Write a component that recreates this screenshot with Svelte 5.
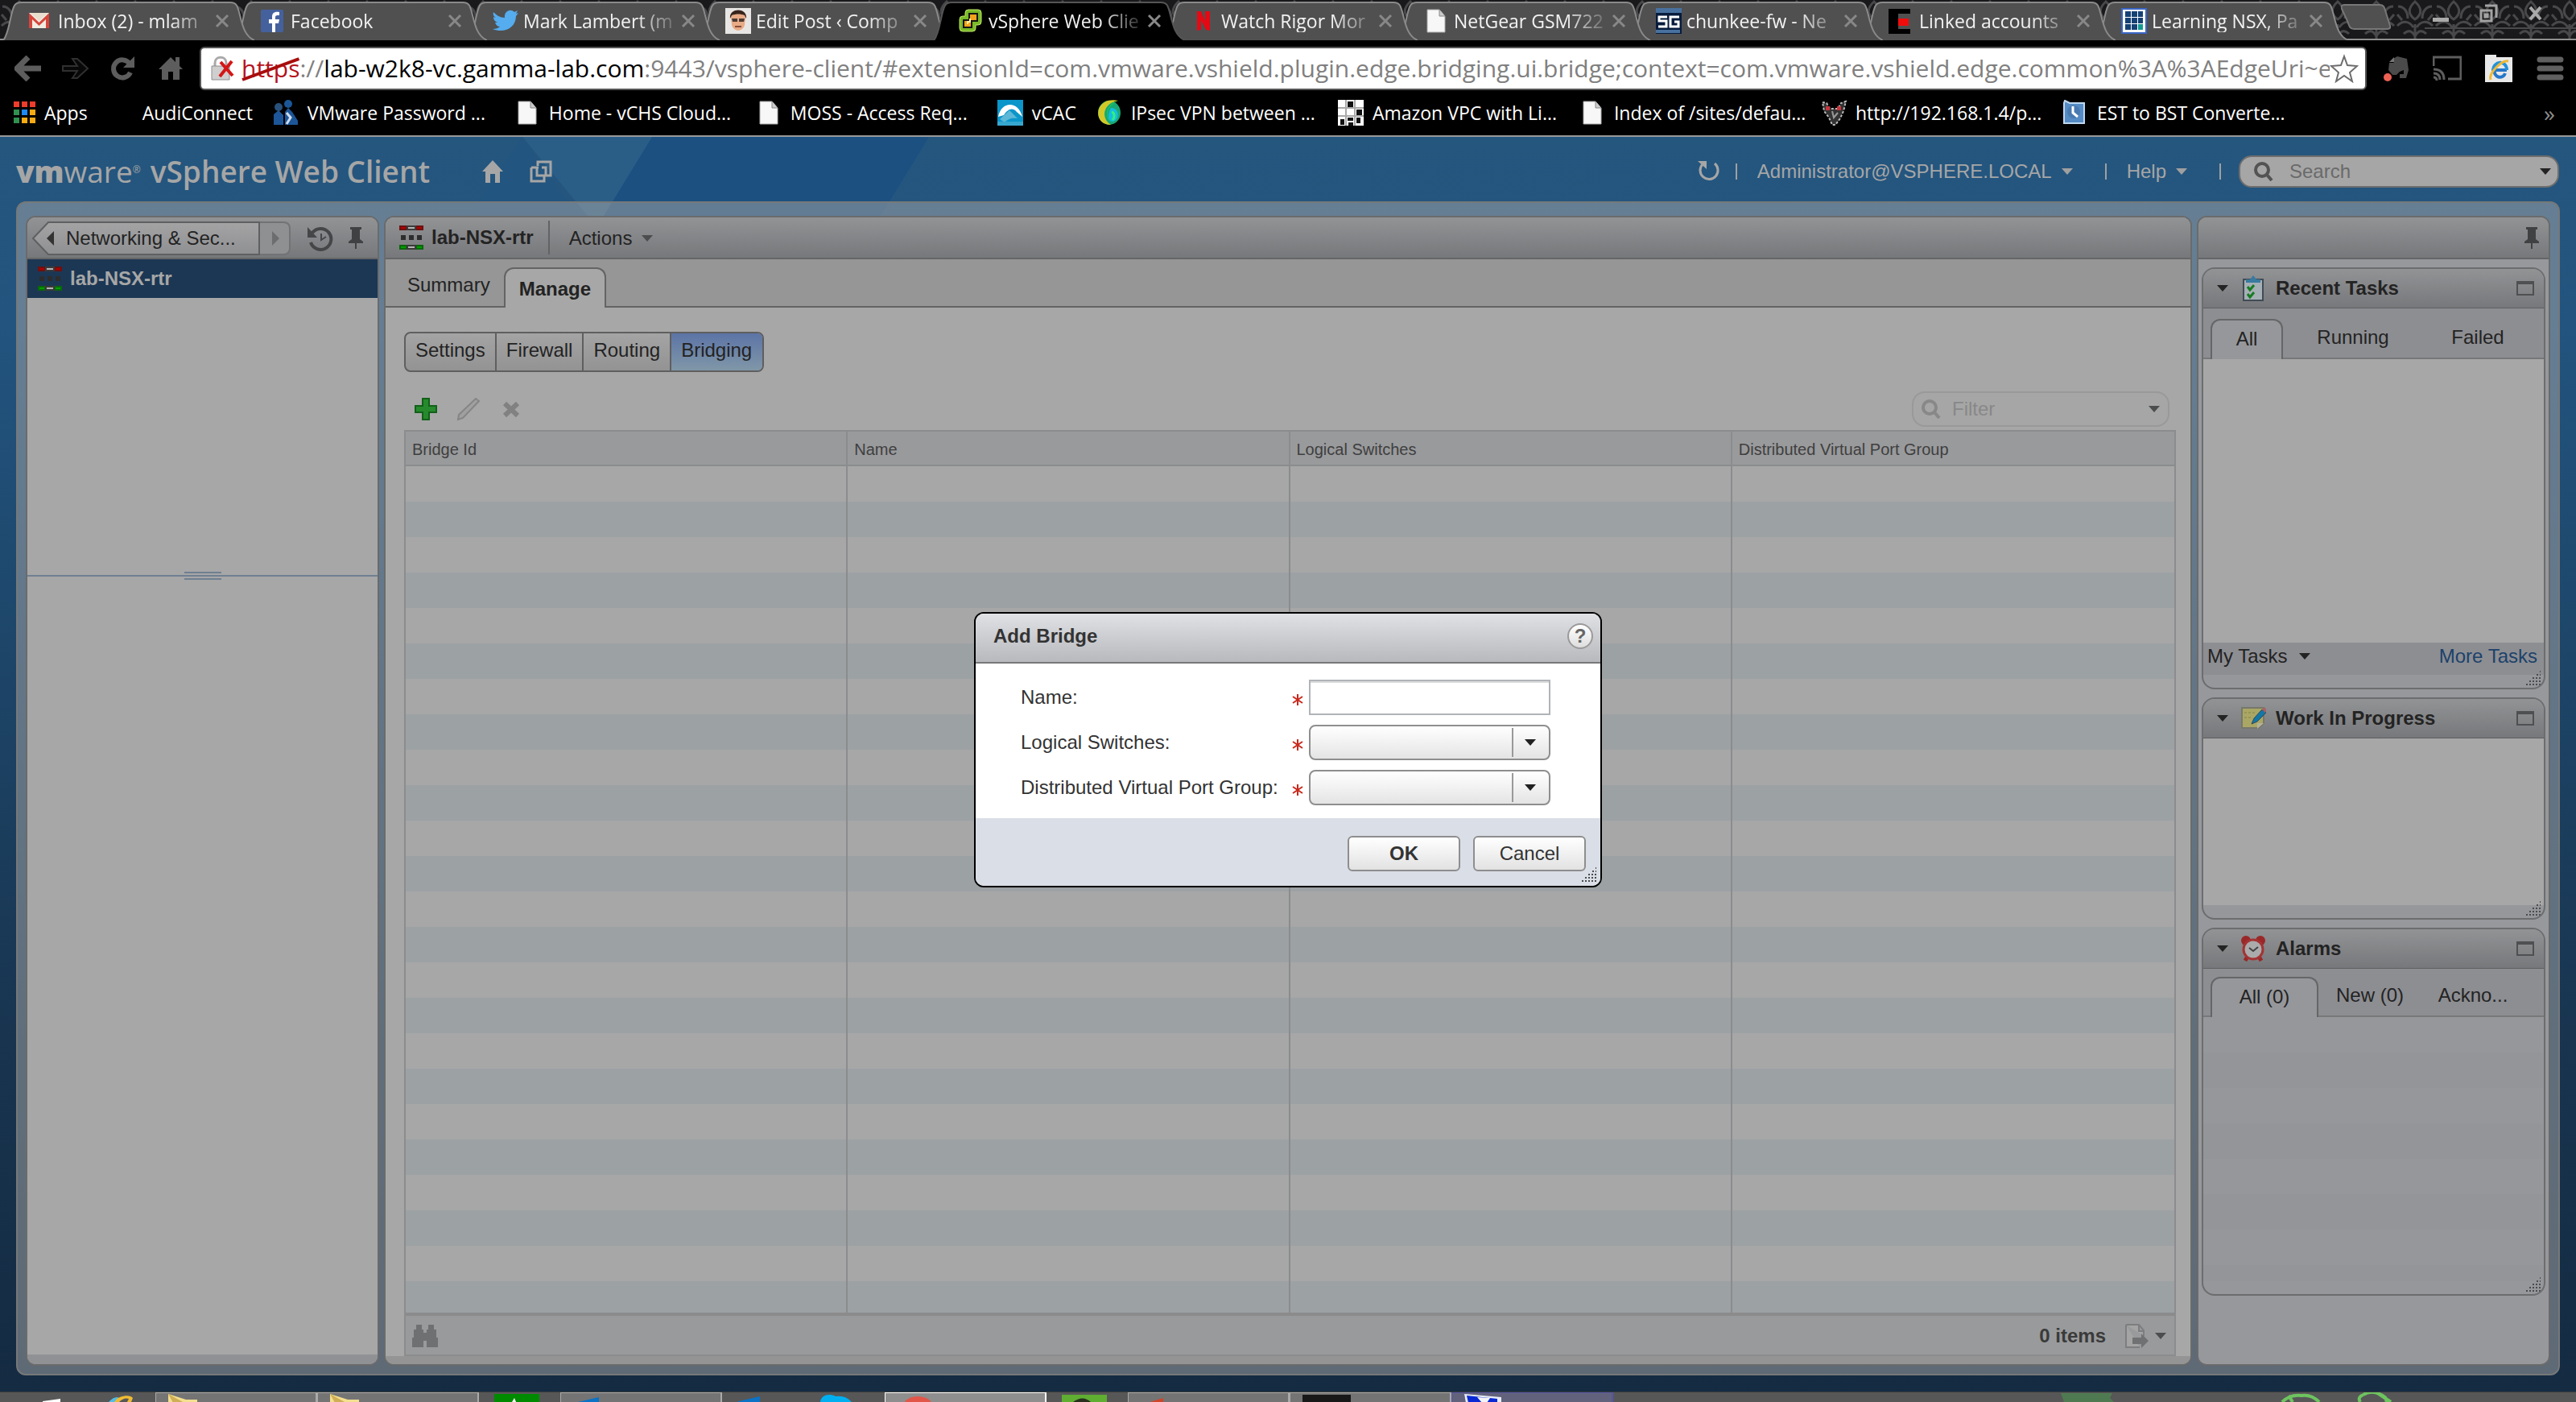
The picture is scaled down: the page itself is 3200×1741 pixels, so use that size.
<script lang="ts">
	interface Tab {
		icon: string;
		title: string;
		active?: boolean;
	}

	interface Bookmark {
		icon: string;
		title: string;
		full?: boolean;
	}

	const tabs: Tab[] = [
		{ icon: 'gmail', title: 'Inbox (2) - mlam' },
		{ icon: 'facebook', title: 'Facebook' },
		{ icon: 'twitter', title: 'Mark Lambert (m' },
		{ icon: 'face', title: 'Edit Post ‹ Comp' },
		{ icon: 'vsphere', title: 'vSphere Web Clie', active: true },
		{ icon: 'netflix', title: 'Watch Rigor Mor' },
		{ icon: 'page', title: 'NetGear GSM722' },
		{ icon: 'sg', title: 'chunkee-fw - Ne' },
		{ icon: 'linked', title: 'Linked accounts' },
		{ icon: 'grid', title: 'Learning NSX, Pa' }
	];

	const bookmarks: Bookmark[] = [
		{ icon: 'apps', title: 'Apps' },
		{ icon: 'none', title: 'AudiConnect' },
		{ icon: 'people', title: 'VMware Password ...', full: true },
		{ icon: 'page', title: 'Home - vCHS Cloud...', full: true },
		{ icon: 'page', title: 'MOSS - Access Req...', full: true },
		{ icon: 'vcac', title: 'vCAC' },
		{ icon: 'swirl', title: 'IPsec VPN between ...', full: true },
		{ icon: 'cells', title: 'Amazon VPC with Li...', full: true },
		{ icon: 'page', title: 'Index of /sites/defau...', full: true },
		{ icon: 'devil', title: 'http://192.168.1.4/p...', full: true },
		{ icon: 'clock', title: 'EST to BST Converte...', full: true }
	];

	const sections = ['Settings', 'Firewall', 'Routing', 'Bridging'];
	const columns = ['Bridge Id', 'Name', 'Logical Switches', 'Distributed Virtual Port Group'];
	const rows = Array.from({ length: 24 }, (_, i) => i);

	const taskbar = [
		{ icon: 'start' },
		{ icon: 'ie' },
		{ icon: 'folder', kind: 'open' },
		{ icon: 'folder', kind: 'open' },
		{ icon: 'store' },
		{ icon: 'office', kind: 'open' },
		{ icon: 'office' },
		{ icon: 'skype' },
		{ icon: 'chrome', kind: 'current' },
		{ icon: 'evernote' },
		{ icon: 'powerpoint', kind: 'open' },
		{ icon: 'console', kind: 'open' },
		{ icon: 'remote', kind: 'alert' }
	];

	let name = $state('');
	let section = $state('Bridging');
</script>

{#snippet favicon(kind: string)}
	<svg class="favicon" viewBox="0 0 32 32" aria-hidden="true">
		{#if kind === 'gmail'}
			<rect x="2" y="6" width="25" height="19" fill="#f1ece2" />
			<path d="M2 6l12.500 12L27 6v19h-4V14l-8.500 8L6 14v11H2z" fill="#d7463b" />
			<path d="M4 6h21L14.500 16z" fill="#eadfce" />
		{:else if kind === 'facebook'}
			<rect x="1" y="2" width="28" height="28" rx="2" fill="#45619d" />
			<path d="M15 30V19h-4v-5h4v-3c0-5 3-7 9-6v4c-4 0-5 0-5 3v2h5l-1 5h-4v11z" fill="#fff" />
		{:else if kind === 'twitter'}
			<path
				d="M1 5c4 4 8 7 14 7-1-8 7-12 12-7l4-2-2 4 3-1-3 4c0 14-14 22-29 16 4 0 7-1 9-3-3 0-5-2-6-5h3c-4-2-5-4-5-7l3 1C1 10 0 8 1 5z"
				fill="#55acee"
			/>
		{:else if kind === 'face'}
			<rect width="32" height="32" fill="#e8e6e4" />
			<path d="M7 11C6 1 26 1 25 11l-1 10c-2 9-14 9-16 0z" fill="#e8ab85" />
			<path d="M6 13C4-1 28-1 26 13l-2-4c-5-2-11-2-16 0z" fill="#37241c" />
			<path d="M8 13h7v4H9zm9 0h7l-1 4h-6z" fill="#4c3b35" />
			<path d="M12 23h8" stroke="#884c3b" stroke-width="2" />
		{:else if kind === 'vsphere'}
			<path d="M13 2h12q4 0 4 4v11q0 4-4 4h-3v4q0 4-4 4H6q-4 0-4-4V14q0-4 4-4h3V6q0-4 4-4z" fill="#79b928" stroke="#c2e86a" />
			<path d="M13 6h12v11h-7v8H6V14h7z" fill="#151515" />
			<path d="M15 8h8v7h-8zM8 16h8v7H8z" fill="#f3a21b" />
			<path d="M15 13v4h-3v3" stroke="#fff1a2" stroke-width="2" fill="none" />
		{:else if kind === 'netflix'}
			<path d="M8 4h5l5 12V4h6v24l-5-1-6-12v12l-5 1z" fill="#e50914" />
		{:else if kind === 'page'}
			<path d="M5 2h15l7 8v20H5z" fill="#f7f7f7" stroke="#a9a9a9" />
			<path d="M20 2v8h7" fill="#ccc" stroke="#888" />
		{:else if kind === 'sg'}
			<rect width="32" height="32" fill="#071c3c" />
			<path d="M0 0h32v6H0zM0 27h30v4H0z" fill="#48719f" />
			<path d="M14 11H4v5h9v7H3M29 11H18v12h10v-6h-5" fill="none" stroke="#fff" stroke-width="3" />
		{:else if kind === 'linked'}
			<path d="M0 1h27v6H12v19h15v6H0z" fill="#000" />
			<path d="M12 13h13v9H12z" fill="#f00c0c" />
		{:else if kind === 'grid'}
			<rect x="1" y="1" width="30" height="30" fill="#fff" stroke="#3a66c6" stroke-width="2" />
			<path d="M5 4h7v7H5zm8 0h7v7h-7zm8 0h6v7h-6zM5 12h7v7H5zm8 0h7v7h-7zm8 0h6v7h-6zM5 20h7v7H5zm8 0h7v7h-7z" fill="#154275" />
			<path d="M21 20h6v7h-6z" fill="#159b91" />
		{:else if kind === 'apps'}
			<path d="M5 2h7v7H5zm10 0h7v7h-7zm10 0h7v7h-7z" fill="#ee3d2c" />
			<path d="M5 12h7v7H5zM5 22h7v7H5z" fill="#31914e" />
			<path d="M15 12h7v7h-7z" fill="#1e88f5" />
			<path d="M25 12h7v7h-7zM15 22h7v7h-7zM25 22h7v7h-7z" fill="#f6ab13" />
		{:else if kind === 'people'}
			<circle cx="7" cy="9" r="5" fill="#28517c" />
			<circle cx="19" cy="5" r="5" fill="#1b5798" />
			<path d="M1 31V18l6-5 6 6v12zM15 31V15l4-5 5 5 7 11v5z" fill="#1c5698" />
			<path d="M17 16l5 6-5 8" stroke="#cddced" stroke-width="3" fill="none" />
		{:else if kind === 'vcac'}
			<rect width="32" height="32" fill="#0a96ca" />
			<path d="M1 21C5 1 26 1 31 21l-7-6c-6-7-12-2-16 4z" fill="#fff" />
			<path d="M3 24l12-11 10 10c-8-1-12 1-16 5z" fill="#5db7d6" />
			<path d="M0 27h32v5H0z" fill="#36a7cf" />
		{:else if kind === 'swirl'}
			<ellipse cx="16" cy="16" rx="14" ry="15" fill="#18a875" />
			<path d="M27 1C8 4 5 23 18 31 5 31 0 21 3 11 8 1 17-1 27 1z" fill="#d2c928" />
			<path d="M27 1C11 6 9 24 20 28 11 24 10 9 27 1z" fill="#14e044" />
			<path d="M18 10c7 0 10 6 8 12s-10 7-11 0c0-5 1-9 3-12z" fill="#13bde0" />
			<path d="M19 15c4 1 4 7 1 10" stroke="#32f07e" stroke-width="3" fill="none" />
		{:else if kind === 'cells'}
			<rect width="32" height="32" fill="#fff" />
			<path d="M0 10h32M0 20h32M10 0v32M21 0v32" stroke="#aaa" stroke-width="2" />
			<path d="M12 2h7v7h-7zM23 12h7v7h-7zM3 24h5v7H3zM12 22h7v4h-7zM13 28h6v4h-6zM23 22h5v7h-5z" fill="#111" />
		{:else if kind === 'devil'}
			<path d="M2 3l5 1 4 7h10l4-7 6-2-3 12-4 9-6 8h-4l-4-9-6-8z" fill="#333" stroke="#b9b9b9" stroke-width="2" stroke-dasharray="3 2" />
			<path d="M6 8h5v5H6zM20 8h5v5h-5z" fill="#c6343b" />
			<path d="M14 14l2 8 5-6" stroke="#999" fill="none" stroke-width="2" />
		{:else if kind === 'clock'}
			<path d="M3 1l6 3h18v25H2V4z" fill="#558bc5" stroke="#bdd8f0" stroke-width="2" />
			<circle cx="14" cy="15" r="8" fill="#487ab1" />
			<path d="M13 8v8l6 5" stroke="#fff" stroke-width="3" fill="none" />
		{/if}
	</svg>
{/snippet}

{#snippet caret(tone: string)}
	<svg class="caret caret--{tone}" viewBox="0 0 14 8" aria-hidden="true"><path d="M0 0h14L7 8z" /></svg>
{/snippet}

{#snippet routerIcon()}
	<svg class="router-icon" viewBox="0 0 30 30" aria-hidden="true">
		<path d="M0 0h30v6H0z" fill="#6b1111" />
		<path d="M2 2h6v2H2zm20 0h6v2h-6z" fill="#b20000" />
		<path d="M9 0h12v6H9zM9 24h12v6H9z" fill="#3b3b3b" />
		<path d="M11 2h8v2h-8zm0 24h8v2h-8z" fill="#b4b4b4" />
		<path d="M2 12h6v6H2zm10 0h6v6h-6zm10 0h6v6h-6z" fill="#2d2d2d" />
		<path d="M0 24h9v6H0zm21 0h9v6h-9z" fill="#0b650b" />
		<path d="M2 26h6v2H2zm20 0h6v2h-6z" fill="#00a000" />
	</svg>
{/snippet}

{#snippet pin()}
	<svg class="pin" viewBox="0 0 18 28" aria-hidden="true">
		<path d="M2 0h14v3h-2v12l4 3v2H0v-2l4-3V3H2zM8 20h2v7H8z" fill="#404143" />
	</svg>
{/snippet}

{#snippet magnifier()}
	<svg class="magnifier" viewBox="0 0 24 24" aria-hidden="true">
		<circle cx="10" cy="10" r="8" /><path d="M16 16l6 7" />
	</svg>
{/snippet}

{#snippet grip()}
	<svg class="grip" viewBox="0 0 20 20" aria-hidden="true">
		<path
			d="M1 18h18M5 14h14M9 10h10M14 6h5M18 2h1"
			stroke="#4a4b4d"
			stroke-width="2"
			stroke-dasharray="2 2"
		/>
	</svg>
{/snippet}

{#snippet required()}
	<svg class="required" viewBox="0 0 14 14" aria-hidden="true"><path d="M7 0v14M1 3l12 8M13 3L1 11" /></svg>
{/snippet}

{#snippet cardHeader(title: string, kind: string)}
	<header class="card__header">
		{@render caret('dark')}
		<svg class="card__icon" viewBox="0 0 32 32" aria-hidden="true">
			{#if kind === 'tasks'}
				<path d="M4 5h24v26H4z" fill="#a5b0b6" stroke="#414b55" stroke-width="2" />
				<path d="M7 9V5h5l4-5 4 5h5v4z" fill="#397a9f" />
				<path d="M9 14l3 4 5-6M9 23l3 4 5-6" fill="none" stroke="#187b22" stroke-width="3" />
			{:else if kind === 'work'}
				<path d="M2 3h27v19l-6 6H2z" fill="#aaa765" stroke="#77786a" stroke-width="2" />
				<path d="M5 9h14M5 15h10" stroke="#85824c" stroke-dasharray="3 2" />
				<path d="M21 29v-7h8z" fill="#b4b29a" />
				<path d="M14 23l3-7L27 5l5 4-11 11z" fill="#1377a6" stroke="#364957" />
				<path d="M27 5l3-3 3 4-2 3z" fill="#aa6068" />
			{:else}
				<circle cx="7" cy="6" r="6" fill="#9a2828" />
				<circle cx="25" cy="6" r="6" fill="#9a2828" />
				<path d="M6 31l4-7m16 7l-4-7" stroke="#9a2828" stroke-width="5" />
				<circle cx="16" cy="17" r="12" fill="#ababab" stroke="#a43333" stroke-width="3" />
				<path d="M11 15l5 4 6-5" fill="none" stroke="#424242" stroke-width="2" />
			{/if}
		</svg>
		<h2>{title}</h2>
		<button class="maximise" aria-label="Maximise {title}"></button>
	</header>
{/snippet}

<div class="desktop">
	<nav class="tabstrip" aria-label="Browser tabs">
		<svg class="tabstrip__pattern" aria-hidden="true">
			<defs>
				<pattern id="damask" width="48" height="50" patternUnits="userSpaceOnUse">
					<path
						d="M24 2c-9 8-9 16 0 22 9-6 9-14 0-22zM3 8c8 0 12 7 12 15M45 8c-8 0-12 7-12 15M2 32c7-7 15-6 20 2M46 32c-7-7-15-6-20 2M24 30v18M10 42q8-8 14 3 6-11 14-3M2 18l6 7M46 18l-6 7"
						fill="none"
						stroke="#48484b"
						stroke-width="3"
					/>
				</pattern>
			</defs>
			<rect width="100%" height="100%" fill="url(#damask)" />
		</svg>
		{#each tabs as tab, i}
			<div class="tab" class:tab--active={tab.active} style:z-index={tab.active ? 20 : 10 - i}>
				<svg class="tab__shape" viewBox="0 0 312 48" aria-hidden="true">
					<path d="M0 48c5-5 7-18 10-31S15 1 22 1h260c8 0 9 4 12 16s6 26 18 31" />
				</svg>
				{@render favicon(tab.icon)}
				<a class="tab__title" href="#{tab.icon}">{tab.title}</a>
				<button class="tab__close" aria-label="Close tab">
					<svg viewBox="0 0 18 18" aria-hidden="true"><path d="M2 2l14 14M16 2L2 16" /></svg>
				</button>
			</div>
		{/each}
		<button class="new-tab" aria-label="New tab">
			<svg viewBox="0 0 62 32" aria-hidden="true"><path d="M4 1h44c6 0 6 4 8 10l5 16c1 3-1 4-4 4H16c-5 0-6-4-8-10L1 6C0 3 1 1 4 1z" /></svg>
		</button>
		<div class="window-buttons">
			<button aria-label="Minimise"><svg viewBox="0 0 24 24"><path d="M2 17h20v5H2z" fill="#aaa" /></svg></button>
			<button aria-label="Restore"><svg viewBox="0 0 24 24"><path d="M8 2h14v15M3 8h13v13H3zM8 13h3v3H8z" fill="none" stroke="#a3a3a3" stroke-width="3" /></svg></button>
			<button aria-label="Close window"><svg viewBox="0 0 24 24"><path d="M5 4l13 15M18 4L5 19" stroke="#aaa" stroke-width="4" /></svg></button>
		</div>
	</nav>

	<div class="toolbar">
		<div class="toolbar__nav">
			<button aria-label="Back"><svg viewBox="0 0 34 32"><path d="M17 2L3 16l14 14M4 16h29" fill="none" stroke="#5d5d5d" stroke-width="7" /></svg></button>
			<button aria-label="Forward"><svg viewBox="0 0 34 32"><path d="M1 13h18L13 4h6l13 12-13 12h-6l6-9H1z" fill="#080808" stroke="#303030" stroke-width="2" /></svg></button>
			<button aria-label="Reload"><svg viewBox="0 0 34 32"><path d="M26 21a11 11 0 1 1-1-11" fill="none" stroke="#5d5d5d" stroke-width="6" /><path d="M31 1v14H17z" fill="#5d5d5d" /></svg></button>
			<button aria-label="Home"><svg viewBox="0 0 34 32"><path d="M17 2l6 6V2h5v11l4 4h-4v13h-8V20h-6v10H6V17H2z" fill="#5d5d5d" /></svg></button>
		</div>
		<label class="address">
			<svg class="address__lock" viewBox="0 0 32 32" aria-hidden="true">
				<path d="M7 14V9c0-9 14-9 14 0v5" fill="none" stroke="#aaa" stroke-width="3" />
				<path d="M3 13h22v17H3z" fill="#cfcfcf" stroke="#8e8e8e" />
				<path d="M14 8l15 17M28 7L13 26" stroke="#d41616" stroke-width="4" />
			</svg>
			<span class="address__scheme">
				https
				<svg viewBox="0 0 70 30" preserveAspectRatio="none" aria-hidden="true"><path d="M1 28L69 2" /></svg>
			</span>
			<span class="address__grey">://</span>
			<span class="address__host">lab-w2k8-vc.gamma-lab.com</span>
			<input
				class="address__grey"
				value=":9443/vsphere-client/#extensionId=com.vmware.vshield.plugin.edge.bridging.ui.bridge;context=com.vmware.vshield.edge.common%3A%3AEdgeUri~e"
				aria-label="Address"
			/>
			<svg class="address__star" viewBox="0 0 36 34" aria-hidden="true"><path d="M18 2l4 11 12 1-9 8 3 11-10-7-10 7 3-11-9-8 12-1z" fill="#fff" stroke="#6c6c6c" stroke-width="2" /></svg>
		</label>
		<div class="toolbar__extensions">
			<button aria-label="Evernote"><svg viewBox="0 0 36 36"><path d="M13 7l7-4 12 3 2 14-3 10h-8v-5h5v-5l-5 2-4 4h-5l-5-6 1-9h6z" fill="#4b4b4b" /><path d="M10 10l6-6v6z" fill="#777" /><circle cx="8" cy="29" r="5" fill="#ed6155" /></svg></button>
			<button aria-label="Cast"><svg viewBox="0 0 36 36"><path d="M1 15V4h34v27H19" fill="none" stroke="#5d5d5d" stroke-width="3" /><path d="M1 19q13 0 13 13M1 24q8 0 8 8M1 29q4 0 4 4" fill="none" stroke="#5d5d5d" stroke-width="3" /></svg></button>
			<button aria-label="IE Tab"><svg viewBox="0 0 36 36"><path d="M1 1h14v3h20v31H1z" fill="#e9e9e9" /><path d="M28 20H13a6 6 0 0 0 13 4" fill="none" stroke="#2577c9" stroke-width="4" /><path d="M11 21c0-13 17-14 17-1" fill="none" stroke="#2492da" stroke-width="4" /><path d="M8 32C5 24 22 7 30 9" fill="none" stroke="#edb936" stroke-width="3" /></svg></button>
			<button aria-label="Menu"><svg viewBox="0 0 36 36"><path d="M5 7h26M5 18h26M5 29h26" stroke="#606060" stroke-width="7" stroke-linecap="round" /></svg></button>
		</div>
	</div>

	<nav class="bookmarks" aria-label="Bookmarks">
		{#each bookmarks as bookmark}
			<a class="bookmark" class:bookmark--full={bookmark.full} href="#bookmark">
				{@render favicon(bookmark.icon)}
				<span>{bookmark.title}</span>
			</a>
		{/each}
		<button class="bookmarks__more" aria-label="More bookmarks">»</button>
	</nav>

	<div class="client">
		<svg class="client__rays" viewBox="0 0 3200 130" aria-hidden="true">
			<path d="M810 0h344l-80 130H730z" fill="#1b5081" />
			<path d="M649 0h161l-60 98h-20z" fill="#2b5e87" />
			<path d="M649 0l90 130H560z" fill="#22557f" />
		</svg>

		<header class="masthead">
			<div class="brand">
				<span class="brand__vm"><b>vm</b>ware<sup>®</sup></span>
				<span>vSphere Web Client</span>
			</div>
			<a href="#home" aria-label="Home"><svg class="masthead__icon" viewBox="0 0 28 28"><path d="M14 0l13 14h-4v14h-6V17h-6v11H5V14H1z" fill="#a6a6a6" /></svg></a>
			<a href="#switch" aria-label="Open windows"><svg class="masthead__icon" viewBox="0 0 28 28"><path d="M10 7V2h16v17h-6M2 9h9M2 9v17h16v-8M9 8v11h11V9h-5" fill="none" stroke="#a6a6a6" stroke-width="3" /></svg></a>
			<div class="session">
				<button aria-label="Refresh"><svg class="masthead__icon" viewBox="0 0 28 28"><path d="M22 4a11 11 0 1 1-15 1" fill="none" stroke="#a6a6a6" stroke-width="3" /><path d="M1 1h11v10z" fill="#a6a6a6" /></svg></button>
				<span class="rule"></span>
				<button class="session__user">Administrator@VSPHERE.LOCAL {@render caret('light')}</button>
				<span class="rule"></span>
				<button class="session__help">Help {@render caret('light')}</button>
				<span class="rule"></span>
			</div>
			<label class="search search--global">
				{@render magnifier()}
				<input type="search" placeholder="Search" aria-label="Search inventory" />
				{@render caret('dark')}
			</label>
		</header>

		<main class="frame">
			<aside class="panel">
				<div class="panel__bar navigator">
					<button class="crumb">
						<svg class="crumb__shape" viewBox="0 0 322 42" aria-hidden="true">
							<defs>
								<linearGradient id="crumb" x2="0" y2="1"><stop stop-color="#a4a4a5" /><stop offset="1" stop-color="#8f9092" /></linearGradient>
							</defs>
							<path d="M282 1h30q8 0 8 8v24q0 8-8 8h-30z" fill="#8f9092" stroke="#727375" stroke-width="2" />
							<path d="M1 21L20 1h262v40H20z" fill="url(#crumb)" stroke="#5f6062" stroke-width="2" />
							<path d="M18 21l9-9v18z" fill="#333" />
							<path d="M307 21l-9-9v18z" fill="#6c6d6f" />
						</svg>
						<span>Networking &amp; Sec...</span>
					</button>
					<svg class="history" viewBox="0 0 32 32" aria-hidden="true">
						<path d="M6 9a13 13 0 1 1-2 12" fill="none" stroke="#454648" stroke-width="4" />
						<path d="M0 2v13h12z" fill="#454648" />
						<path d="M17 10v8l6-4" fill="none" stroke="#454648" stroke-width="2" />
					</svg>
					{@render pin()}
				</div>
				<a class="tree-item" href="#lab">{@render routerIcon()} lab-NSX-rtr</a>
				<div class="tree-space"></div>
				<div class="splitter"><span></span></div>
				<div class="panel__fill"></div>
				<div class="panel__foot"></div>
			</aside>

			<section class="panel">
				<div class="panel__bar object-bar">
					{@render routerIcon()}
					<h1>lab-NSX-rtr</h1>
					<button class="actions">Actions {@render caret('mid')}</button>
				</div>
				<nav class="main-tabs">
					<a href="#summary">Summary</a>
					<a class="current" href="#manage">Manage</a>
				</nav>
				<div class="content">
					<div class="sections">
						{#each sections as item}
							<button class:selected={item === section} onclick={() => (section = item)}>{item}</button>
						{/each}
					</div>
					<div class="tools">
						<button aria-label="Add"><svg viewBox="0 0 30 30"><path d="M11 2h8v9h9v8h-9v9h-8v-9H2v-8h9z" fill="#268a2d" stroke="#126019" stroke-width="2" /></svg></button>
						<button aria-label="Edit"><svg viewBox="0 0 30 30"><path d="M3 22L24 2l4 3L8 26l-6 2z" fill="#a0a0a0" stroke="#858585" stroke-width="2" /></svg></button>
						<button aria-label="Delete"><svg viewBox="0 0 30 30"><path d="M7 8l16 15M23 8L7 23" stroke="#818181" stroke-width="6" /></svg></button>
						<label class="search search--filter">
							{@render magnifier()}
							<input type="search" placeholder="Filter" aria-label="Filter bridges" />
							{@render caret('mid')}
						</label>
					</div>
					<div class="grid">
						<div class="grid__scroll">
							<table>
								<thead>
									<tr>
										{#each columns as column}
											<th scope="col">{column}</th>
										{/each}
									</tr>
								</thead>
								<tbody>
									{#each rows as row (row)}
										<tr>
											{#each columns as column (column)}
												<td></td>
											{/each}
										</tr>
									{/each}
								</tbody>
							</table>
						</div>
						<footer class="grid__foot">
							<svg class="binoculars" viewBox="0 0 32 28" aria-hidden="true">
								<path d="M5 0h7v6h2v4h4V6h2V0h7v6h3v10h2v12H18v-8h-4v8H0V16h2V6h3z" fill="#6f7072" />
							</svg>
							<strong>0 items</strong>
							<button class="export" aria-label="Export">
								<svg viewBox="0 0 30 30"><path d="M1 1h16l6 7v7M1 1v28h17M17 1v8h6" fill="#a4a4a4" stroke="#7d7e80" stroke-width="2" /><path d="M9 17h11v-5l9 9-9 9v-5H9z" fill="#707173" /></svg>
								{@render caret('mid')}
							</button>
						</footer>
					</div>
				</div>
				<div class="content-foot"></div>
			</section>

			<aside class="panel panel--side">
				<div class="panel__bar side-bar">{@render pin()}</div>
				<div class="cards">
					<section class="card">
						{@render cardHeader('Recent Tasks', 'tasks')}
						<nav class="card__tabs card__tabs--tasks">
							<a class="current" href="#all">All</a>
							<a href="#running">Running</a>
							<a href="#failed">Failed</a>
						</nav>
						<div class="card__list card__list--tasks"></div>
						<div class="card__links">
							<button>My Tasks {@render caret('dark')}</button>
							<a href="#more">More Tasks</a>
						</div>
						<div class="card__foot">{@render grip()}</div>
					</section>
					<section class="card">
						{@render cardHeader('Work In Progress', 'work')}
						<div class="card__list card__list--work"></div>
						<div class="card__foot">{@render grip()}</div>
					</section>
					<section class="card">
						{@render cardHeader('Alarms', 'alarms')}
						<nav class="card__tabs card__tabs--alarms">
							<a class="current" href="#all-alarms">All (0)</a>
							<a href="#new">New (0)</a>
							<a href="#ack">Ackno...</a>
						</nav>
						<div class="card__list card__list--alarms"></div>
						<div class="card__foot">{@render grip()}</div>
					</section>
				</div>
			</aside>
		</main>

		<div class="overlay">
			<form class="dialog" role="dialog" aria-labelledby="dialog-title" onsubmit={(e) => e.preventDefault()}>
				<header class="dialog__header">
					<h2 id="dialog-title">Add Bridge</h2>
					<button type="button" class="help" aria-label="Help">?</button>
				</header>
				<div class="dialog__body">
					<label for="bridge-name">Name:</label>
					{@render required()}
					<input id="bridge-name" type="text" bind:value={name} />

					<label for="bridge-switch">Logical Switches:</label>
					{@render required()}
					<div class="select">
						<select id="bridge-switch"><option value=""></option></select>
						<span class="select__arrow">{@render caret('black')}</span>
					</div>

					<label for="bridge-group">Distributed Virtual Port Group:</label>
					{@render required()}
					<div class="select">
						<select id="bridge-group"><option value=""></option></select>
						<span class="select__arrow">{@render caret('black')}</span>
					</div>
				</div>
				<footer class="dialog__footer">
					<button class="button button--primary">OK</button>
					<button type="button" class="button">Cancel</button>
				</footer>
				<div class="dialog__grip">{@render grip()}</div>
			</form>
		</div>
	</div>

	<footer class="taskbar">
		{#each taskbar as task}
			<div class="task task--{task.kind ?? 'pinned'}">
				<svg viewBox="0 0 60 12" aria-hidden="true">
					{#if task.icon === 'start'}
						<path d="M38 12v-1l22-3v4z" fill="#fff" />
					{:else if task.icon === 'ie'}
						<path d="M31 12C42 4 54 2 58 7l-2 5h-5l2-4q-6-2-12 4z" fill="#f0bc33" />
						<path d="M28 12q6-7 12-6l-5 6z" fill="#51bce6" />
					{:else if task.icon === 'folder'}
						<path d="M0 1l22 7h14v4H0z" fill="#f3df8f" />
						<path d="M0 1l20 11H6z" fill="#cfae55" />
					{:else if task.icon === 'store'}
						<path d="M4 2h56v10H4z" fill="#008a00" />
						<path d="M26 12l3-5 2 5z" fill="#fff" />
					{:else if task.icon === 'office'}
						<path d="M6 11l26-6v7H4z" fill="#0b72c6" />
					{:else if task.icon === 'skype'}
						<path d="M6 12C7 3 17 1 25 5q12-2 20 7z" fill="#00aff0" />
					{:else if task.icon === 'chrome'}
						<path d="M8 12Q13 4 25 4t18 8z" fill="#e2564a" />
					{:else if task.icon === 'evernote'}
						<rect x="4" y="3" width="56" height="9" fill="#5fae32" />
						<path d="M18 12q12-9 22 0z" fill="#28301d" />
					{:else if task.icon === 'powerpoint'}
						<path d="M8 12l20-6v6z" fill="#d0452a" />
					{:else if task.icon === 'console'}
						<path d="M0 2h60v10H0z" fill="#181818" />
					{:else}
						<path d="M0 1l46 4v7H2z" fill="#e8ecf5" />
						<path d="M3 3l38 4v5H5z" fill="#0a28d4" />
						<path d="M16 5l16 1-4 6h-6z" fill="#f4f4f4" />
					{/if}
				</svg>
			</div>
		{/each}
		<svg class="taskbar__paint" viewBox="0 0 640 12" aria-hidden="true">
			<path d="M0 1h64l-3 6 5 5H4z" fill="#4f7a51" />
			<path d="M275 12q10-10 24-8 12-2 22 8M288 12l-5-8M376 3q8-6 20-1 10 4 8 10M372 12q-4-6 4-9M392 0l18 12" fill="none" stroke="#6dc45f" stroke-width="4" />
		</svg>
	</footer>
</div>

<style>
	:global(body) {
		background: #000;
	}

	.desktop {
		--ui: 'Liberation Sans', Arial, sans-serif;
		--chrome: 'Open Sans', 'Noto Sans', sans-serif;
		display: flex;
		flex-direction: column;
		height: 100vh;
		overflow: hidden;
		color: #232323;
		font: 24px/28px var(--ui);
	}

	.desktop *,
	.desktop *::before {
		box-sizing: border-box;
	}

	button,
	input,
	select {
		margin: 0;
		padding: 0;
		border: 0;
		background: none;
		color: inherit;
		font: inherit;
	}

	input {
		min-width: 0;
		outline: 0;
	}

	a {
		color: inherit;
		text-decoration: none;
	}

	svg {
		display: block;
		flex: none;
	}

	h1,
	h2 {
		margin: 0;
		font-size: 24px;
		line-height: 28px;
	}

	/* browser chrome */
	.tabstrip {
		position: relative;
		display: flex;
		flex: none;
		height: 50px;
		padding-left: 4px;
		border-bottom: 2px solid #8f8f8f;
		background: #19191b;
		font-family: var(--chrome);
	}

	.tabstrip__pattern {
		position: absolute;
		inset: 0;
		width: 100%;
		height: 100%;
	}

	.tab {
		position: relative;
		display: flex;
		flex: 0 1 289px;
		align-items: center;
		min-width: 0;
		padding: 4px 8px 0 30px;
		color: #f2f2f2;
	}

	.tab__shape {
		position: absolute;
		top: 2px;
		left: 0;
		width: 312px;
		height: 48px;
		fill: #505051;
		stroke: #8a8a8a;
		stroke-width: 2;
	}

	.tab--active .tab__shape {
		fill: #000;
		stroke: #555;
	}

	.favicon {
		position: relative;
		width: 32px;
		height: 32px;
	}

	.tab__title {
		position: relative;
		flex: 1;
		margin: 0 10px 0 6px;
		font-size: 23px;
		white-space: nowrap;
		mask-image: linear-gradient(90deg, #000 75%, rgb(0 0 0 / 20%));
	}

	.tab__close {
		position: relative;
	}

	.tab__close svg {
		width: 18px;
		height: 18px;
		fill: none;
		stroke: #888;
		stroke-width: 3;
	}

	.new-tab {
		position: relative;
		margin: 0 0 6px 14px;
	}

	.new-tab svg {
		width: 62px;
		height: 32px;
		fill: #505051;
		stroke: #777;
		stroke-width: 2;
	}

	.window-buttons {
		position: relative;
		display: flex;
		gap: 35px;
		align-items: center;
		height: 36px;
		margin-left: auto;
		padding: 0 38px 0 8px;
		border-bottom: 2px solid #49494b;
	}

	.window-buttons svg {
		width: 24px;
		height: 24px;
	}

	.toolbar {
		display: flex;
		flex: none;
		align-items: center;
		height: 70px;
		background: #000;
	}

	.toolbar__nav {
		display: flex;
		gap: 25px;
		padding: 0 19px 0 18px;
	}

	.toolbar__nav svg {
		width: 34px;
		height: 32px;
	}

	.address {
		display: flex;
		flex: 1;
		align-items: center;
		min-width: 0;
		height: 54px;
		padding: 0 8px 0 10px;
		border: 2px solid #555;
		border-radius: 6px;
		background: #fff;
		font: 30px/40px var(--chrome);
		white-space: nowrap;
	}

	.address__lock {
		width: 32px;
		height: 32px;
		margin-right: 8px;
	}

	.address__scheme {
		position: relative;
		color: #b5121b;
	}

	.address__scheme svg {
		position: absolute;
		inset: 6px 0 auto;
		width: 100%;
		height: 30px;
		stroke: #a80d0d;
		stroke-width: 4;
	}

	.address__grey {
		color: #808080;
	}

	.address__host {
		color: #000;
	}

	.address input {
		flex: 1;
	}

	.address__star {
		width: 36px;
		height: 36px;
	}

	.toolbar__extensions {
		display: flex;
		gap: 28px;
		padding: 0 14px 0 18px;
	}

	.toolbar__extensions svg {
		width: 36px;
		height: 36px;
	}

	.bookmarks {
		display: flex;
		flex: none;
		align-items: center;
		height: 50px;
		padding: 0 26px 8px 12px;
		border-bottom: 2px solid #999;
		background: #000;
		color: #fff;
		font-family: var(--chrome);
		font-size: 23px;
	}

	.bookmark {
		display: flex;
		gap: 11px;
		align-items: center;
		padding-right: 25px;
		white-space: nowrap;
	}

	.bookmark--full {
		flex: 0 1 300px;
		padding-right: 0;
	}

	.bookmarks__more {
		margin-left: auto;
		color: #8b8b8b;
		font-size: 28px;
	}

	/* web client */
	.client {
		position: relative;
		display: flex;
		flex: 1;
		flex-direction: column;
		min-height: 0;
		background: linear-gradient(#25567e, #22547f 15%, #1d4568 42%, #18344f 72%, #142b42);
	}

	.client__rays {
		position: absolute;
		top: 0;
		left: 0;
		width: 100%;
	}

	.masthead {
		position: relative;
		display: flex;
		flex: none;
		gap: 32px;
		align-items: center;
		height: 80px;
		padding: 6px 21px 0 20px;
		color: #a6a6a6;
	}

	.brand {
		display: flex;
		gap: 12px;
		margin-right: 32px;
		font: 600 37px/40px var(--chrome);
	}

	.brand__vm {
		font-weight: 400;
	}

	.brand b {
		font-weight: 800;
	}

	.brand sup {
		font-size: 12px;
		line-height: 12px;
		vertical-align: 12px;
	}

	.masthead__icon {
		width: 28px;
		height: 28px;
	}

	.session {
		display: flex;
		align-items: center;
		margin-left: auto;
		white-space: nowrap;
	}

	.session__user,
	.session__help {
		display: flex;
		gap: 12px;
		align-items: center;
		margin: 0 40px 0 25px;
	}

	.rule {
		width: 2px;
		height: 20px;
		margin-left: 20px;
		background: #a0a0a0;
	}

	.session__user + .rule,
	.session__help + .rule {
		margin-left: 0;
	}

	.session__help + .rule {
		margin-right: -10px;
	}

	.caret {
		width: 14px;
		height: 8px;
		fill: #232323;
	}

	.caret--light {
		fill: #a0a0a0;
	}

	.caret--mid {
		fill: #4c4d4e;
	}

	.caret--black {
		fill: #222;
	}

	.search {
		display: flex;
		align-items: center;
		border: 2px solid #6e6e6e;
		border-radius: 16px;
		background: #a6a6a6;
	}

	.search input {
		flex: 1;
	}

	.search input::placeholder {
		color: #6a6a6a;
		opacity: 1;
	}

	.search--global {
		width: 398px;
		height: 40px;
		padding: 0 8px 0 17px;
	}

	.magnifier {
		width: 24px;
		height: 24px;
		margin-right: 20px;
		fill: none;
		stroke: #535353;
		stroke-width: 4;
	}

	.search--filter {
		width: 320px;
		height: 44px;
		margin: 0 8px 0 auto;
		padding: 0 10px;
		border-color: #999;
	}

	.search--filter .magnifier {
		margin-right: 14px;
		stroke: #888;
	}

	.search--filter input::placeholder {
		color: #888;
	}

	.frame {
		position: relative;
		display: grid;
		flex: 1;
		grid-template-columns: 439px minmax(0, 1fr) 439px;
		gap: 6px;
		min-height: 0;
		margin: 0 20px 20px;
		padding: 16px 10px 10px;
		border: 2px solid #767879;
		border-radius: 12px;
		background: rgb(166 166 166 / 51%);
	}

	.panel {
		display: flex;
		flex-direction: column;
		min-width: 0;
		min-height: 0;
		overflow: hidden;
		border: 2px solid #6a6b6c;
		border-radius: 12px;
		background: #a7a7a7;
	}

	.panel--side {
		background: #97989c;
	}

	.panel__bar {
		display: flex;
		flex: none;
		align-items: center;
		height: 52px;
		border-bottom: 2px solid #656667;
		background: linear-gradient(#929395, #77787b);
	}

	.navigator {
		justify-content: space-between;
		padding: 2px 18px 0 6px;
	}

	.crumb {
		position: relative;
		width: 322px;
		height: 42px;
		padding-left: 42px;
		text-align: left;
	}

	.crumb span {
		position: relative;
	}

	.crumb__shape {
		position: absolute;
		inset: 0;
		width: 322px;
		height: 42px;
	}

	.history {
		width: 32px;
		height: 32px;
	}

	.pin {
		width: 18px;
		height: 28px;
	}

	.router-icon {
		width: 30px;
		height: 30px;
	}

	.tree-item {
		display: flex;
		flex: none;
		gap: 10px;
		align-items: center;
		height: 48px;
		padding-left: 13px;
		background: #1c3754;
		color: #a7a7a7;
		font-weight: 700;
	}

	.tree-space {
		flex: none;
		height: 340px;
	}

	.splitter {
		display: flex;
		flex: none;
		align-items: center;
		justify-content: center;
		height: 10px;
		background: linear-gradient(#6f7f91, #6f7f91) center / 100% 2px no-repeat;
	}

	.splitter span {
		width: 46px;
		height: 10px;
		border: solid #6f7f91;
		border-width: 2px 0;
	}

	.panel__fill {
		flex: 1;
	}

	.panel__foot {
		height: 12px;
		background: #909195;
	}

	.object-bar {
		padding-left: 17px;
	}

	.object-bar h1 {
		margin: 0 18px 0 10px;
	}

	.actions {
		display: flex;
		gap: 12px;
		align-items: center;
		height: 42px;
		padding: 2px 0 0 24px;
		border-left: 2px solid #626364;
	}

	.main-tabs {
		display: flex;
		flex: none;
		align-items: flex-end;
		height: 60px;
		padding-left: 27px;
		background: linear-gradient(#646464, #646464) bottom / 100% 2px no-repeat #969696;
	}

	.main-tabs a {
		height: 42px;
		padding-right: 17px;
	}

	.main-tabs .current {
		height: 50px;
		padding: 11px 17px 0;
		border: 2px solid #646464;
		border-bottom: 0;
		border-radius: 12px 12px 0 0;
		background: #a7a7a7;
		font-weight: 700;
	}

	.content {
		display: flex;
		flex: 1;
		flex-direction: column;
		min-height: 0;
		padding: 30px 18px 0 23px;
	}

	.sections {
		display: flex;
		align-self: flex-start;
		overflow: hidden;
		border: 2px solid #5f5f5f;
		border-radius: 8px;
		background: linear-gradient(#a4a4a4, #939393);
	}

	.sections button {
		height: 46px;
		padding: 0 12px 4px;
	}

	.sections button + button {
		border-left: 2px solid #5f5f5f;
	}

	.sections .selected {
		padding-right: 13px;
		background: linear-gradient(#5c74a6, #8097a8);
	}

	.tools {
		display: flex;
		gap: 23px;
		align-items: center;
		height: 44px;
		margin: 24px 0 4px;
		padding-left: 12px;
	}

	.tools svg:not(.caret, .magnifier) {
		width: 30px;
		height: 30px;
	}

	.grid {
		display: flex;
		flex: 1;
		flex-direction: column;
		min-height: 0;
		border: 2px solid #8b8c8d;
	}

	.grid__scroll {
		flex: 1;
		min-height: 0;
		overflow: hidden;
	}

	table {
		width: 100%;
		border-spacing: 0;
		table-layout: fixed;
	}

	th {
		height: 43px;
		padding: 2px 8px 0;
		border-bottom: 2px solid #8b8c8d;
		background: #999a9c;
		color: #3f3f3f;
		font-size: 20px;
		font-weight: 400;
		text-align: left;
	}

	td {
		height: 44px;
		padding: 0;
	}

	th:not(:last-child),
	td:not(:last-child) {
		border-right: 2px solid #8b8c8d;
	}

	tbody tr:nth-child(even) {
		background: #9ca1a4;
	}

	.grid__foot {
		display: flex;
		flex: none;
		gap: 24px;
		align-items: center;
		height: 52px;
		padding: 2px 10px 0 8px;
		border-top: 4px solid #8b8b8b;
		background: #999a9c;
		color: #3a3a3a;
	}

	.binoculars {
		width: 32px;
		height: 28px;
		margin-right: auto;
	}

	.export {
		display: flex;
		gap: 7px;
		align-items: center;
	}

	.export svg:first-child {
		width: 30px;
		height: 30px;
	}

	.content-foot {
		height: 10px;
		background: #949494;
	}

	.side-bar {
		justify-content: flex-end;
		padding: 2px 12px 0 0;
	}

	.cards {
		display: grid;
		gap: 10px;
		padding: 10px 4px;
	}

	.card {
		overflow: hidden;
		border: 2px solid #6c6d6e;
		border-radius: 16px;
		background: #96979b;
	}

	.card__header {
		display: flex;
		align-items: center;
		height: 49px;
		padding: 0 12px 0 17px;
		border-bottom: 1px solid #5e5f60;
		background: linear-gradient(#929395, #77787b);
	}

	.card__icon {
		width: 32px;
		height: 32px;
		margin: 0 12px 0 15px;
	}

	.maximise {
		width: 22px;
		height: 18px;
		margin-left: auto;
		border: 2px solid #4f5051;
		border-top-width: 4px;
	}

	.card__tabs {
		display: grid;
		padding: 10px 9px 0;
		background: linear-gradient(#777879, #777879) bottom / 100% 2px no-repeat #8d8e92;
		text-align: center;
	}

	.card__tabs--tasks {
		grid-template-columns: 90px 174px 136px;
		padding-top: 13px;
	}

	.card__tabs--alarms {
		grid-template-columns: 134px 128px 128px;
	}

	.card__tabs a {
		height: 50px;
		padding-top: 9px;
	}

	.card__tabs .current {
		border: 2px solid #656667;
		border-bottom: 0;
		border-radius: 12px 12px 0 0;
		background: #96979b;
	}

	.card__list {
		background: #a7a7a7;
	}

	.card__list--tasks {
		height: 352px;
	}

	.card__list--work {
		height: 207px;
	}

	.card__list--alarms {
		height: 328px;
		background: repeating-linear-gradient(#96979b 0 44px, #939599 44px 88px);
	}

	.card__links {
		display: flex;
		justify-content: space-between;
		height: 40px;
		padding: 3px 8px 0 5px;
		background: #8d8e92;
	}

	.card__links button {
		display: flex;
		gap: 14px;
		align-items: center;
		height: 28px;
	}

	.card__links a {
		color: #1c426b;
	}

	.card__foot {
		display: flex;
		align-items: flex-end;
		justify-content: flex-end;
		height: 16px;
		padding: 0 3px 2px 0;
	}

	.grip {
		width: 20px;
		height: 20px;
	}

	/* dialog */
	.overlay {
		position: absolute;
		inset: 0;
		display: flex;
		align-items: flex-start;
		justify-content: center;
		padding-top: 590px;
	}

	.dialog {
		position: relative;
		width: 780px;
		overflow: hidden;
		border: 2px solid #000;
		border-radius: 12px;
		background: #fff;
		color: #333;
	}

	.dialog__header {
		display: flex;
		align-items: center;
		justify-content: space-between;
		height: 62px;
		padding: 0 9px 4px 22px;
		border-bottom: 2px solid #77787a;
		background: linear-gradient(#e0e1e4, #b8b9bd);
	}

	.help {
		width: 32px;
		height: 32px;
		border: 2px solid #9a9a9a;
		border-radius: 50%;
		background: linear-gradient(#fff, #ddd);
		color: #666;
		font-weight: 700;
		line-height: 26px;
	}

	.dialog__body {
		display: grid;
		grid-template-columns: 1fr 21px 300px;
		gap: 12px 0;
		padding: 20px 62px 16px 56px;
	}

	.dialog__body label {
		line-height: 44px;
	}

	.required {
		align-self: center;
		width: 14px;
		height: 14px;
		margin-top: 6px;
		stroke: #c9291c;
		stroke-width: 2;
	}

	.dialog__body input {
		height: 44px;
		padding: 0 8px;
		border: 2px solid #b0b4b8;
		box-shadow: inset 0 2px #dcdcdc;
	}

	.select {
		position: relative;
	}

	.select select {
		display: block;
		width: 100%;
		height: 44px;
		padding: 0 54px 0 10px;
		border: 2px solid #8e8e8e;
		border-radius: 8px;
		appearance: none;
		background: linear-gradient(#fff, #e4e4e4);
	}

	.select__arrow {
		position: absolute;
		inset: 4px 4px 4px auto;
		display: grid;
		place-items: center;
		width: 44px;
		border-left: 2px solid #999;
		pointer-events: none;
	}

	.dialog__footer {
		display: flex;
		gap: 16px;
		justify-content: flex-end;
		height: 84px;
		padding: 22px 18px 0;
		background: #dadee6;
	}

	.button {
		width: 140px;
		height: 44px;
		border: 2px solid #8e8e8e;
		border-radius: 6px;
		background: linear-gradient(#fff, #e2e2e2);
	}

	.button--primary {
		font-weight: 700;
	}

	.dialog__grip {
		position: absolute;
		right: 4px;
		bottom: 4px;
	}

	.taskbar {
		display: flex;
		flex: none;
		height: 13px;
		overflow: hidden;
		border-top: 1px solid #3c3c3c;
		background: #575757;
	}

	.task {
		flex: 0 1 101px;
		padding-left: 15px;
	}

	.task:first-child {
		flex-basis: 92px;
	}

	.task svg {
		width: 60px;
		height: 12px;
	}

	.task--open,
	.task--current,
	.task--alert {
		flex-basis: 201px;
		border: solid #aaa;
		border-width: 1px 2px 0 1px;
		background: #747474;
	}

	.task--current {
		border-color: #fff;
		background: #8e8e8e;
	}

	.task--alert {
		border-color: #5656a8;
		background: #62627c;
	}

	.taskbar__paint {
		width: 640px;
		height: 12px;
		margin-left: auto;
	}
</style>
